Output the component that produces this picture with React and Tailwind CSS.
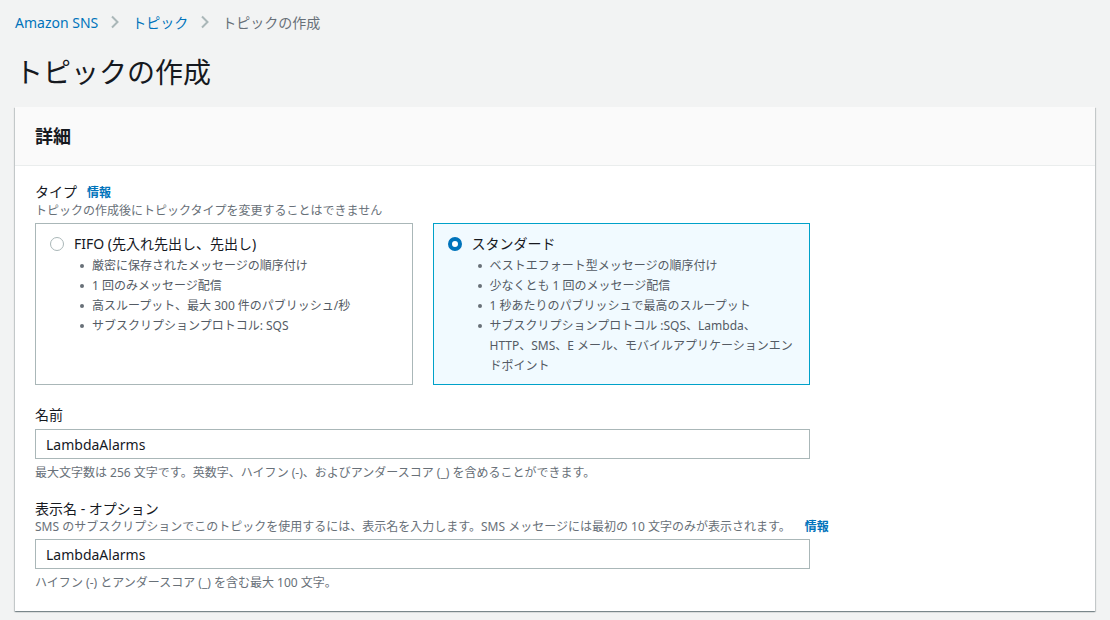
const font = { fontFamily: '"Noto Sans", "Noto Sans CJK JP", sans-serif' }

const Chevron = () => (
  <svg width="10" height="14" viewBox="0 0 10 14" className="mx-[12px]" aria-hidden>
    <path d="M2 1.5 L7.5 7 L2 12.5" fill="none" stroke="#aab7b8" strokeWidth="2" />
  </svg>
)

const RadioCard = ({ selected, title, items }) => (
  <div
    className={`h-[162px] flex-1 border px-[14px] pt-[10px] ${
      selected ? 'border-[#00a1c9] bg-[#f1faff]' : 'border-[#aab7b8] bg-white'
    }`}
  >
    <div className="flex items-center gap-[10px]">
      {selected ? (
        <span className="h-[14px] w-[14px] rounded-full border-[4px] border-[#0073bb] bg-white" />
      ) : (
        <span className="h-[14px] w-[14px] rounded-full border border-[#aab7b8] bg-white" />
      )}
      <span className="text-[14px] leading-[20px] text-[#16191f]">{title}</span>
    </div>
    <ul className="mt-[2px] pl-[30px]">
      {items.map((t) => (
        <li key={t} className="flex text-[12px] leading-[20px] text-[#545b64]">
          <span className="mr-[8px] mt-[8px] h-[4px] w-[4px] shrink-0 rounded-full bg-[#687078]" />
          <span>{t}</span>
        </li>
      ))}
    </ul>
  </div>
)

const Field = ({ label, desc, info, value, hint }) => (
  <div>
    <div className="text-[14px] leading-[20px] text-[#16191f]">{label}</div>
    {desc ? (
      <div className="whitespace-nowrap text-[12px] leading-[16px] text-[#687078]">
        {desc}
        {info ? <span className="ml-[14px] font-bold text-[#0073bb]">情報</span> : null}
      </div>
    ) : null}
    <div className="mt-[4px] flex h-[30px] items-center border border-[#aab7b8] bg-white px-[10px] text-[14px] text-[#16191f]">
      {value}
    </div>
    <div className="mt-[6px] text-[12px] leading-[16px] text-[#687078]">{hint}</div>
  </div>
)

export default function App() {
  return (
    <div className="min-h-[620px] bg-[#f2f3f3] px-[15px] pt-[12px]" style={font}>
      <nav className="flex h-[20px] items-center text-[14px]">
        <span className="text-[#0073bb]">Amazon SNS</span>
        <Chevron />
        <span className="text-[#0073bb]">トピック</span>
        <Chevron />
        <span className="text-[#687078]">トピックの作成</span>
      </nav>
      <h1 className="mt-[20px] text-[28px] leading-[40px] text-[#16191f]">トピックの作成</h1>
      <section className="mt-[15px] bg-white shadow-[0_1px_1px_0_rgba(0,28,36,0.3),1px_1px_1px_0_rgba(0,28,36,0.15),-1px_1px_1px_0_rgba(0,28,36,0.15)]">
        <div className="flex h-[59px] items-center border-b border-[#eaeded] bg-[#fafafa] px-[20px]">
          <h2 className="text-[18px] font-bold text-[#16191f]">詳細</h2>
        </div>
        <div className="w-[815px] px-[20px] pt-[16px] pb-[20px]">
          <div className="flex items-baseline gap-[10px] text-[14px] leading-[20px] text-[#16191f]">
            タイプ <span className="text-[12px] font-bold text-[#0073bb]">情報</span>
          </div>
          <div className="text-[12px] leading-[16px] text-[#687078]">
            トピックの作成後にトピックタイプを変更することはできません
          </div>
          <div className="mt-[4px] flex gap-[20px]">
            <RadioCard
              title="FIFO (先入れ先出し、先出し)"
              items={[
                '厳密に保存されたメッセージの順序付け',
                '1 回のみメッセージ配信',
                '高スループット、最大 300 件のパブリッシュ/秒',
                'サブスクリプションプロトコル: SQS',
              ]}
            />
            <RadioCard
              selected
              title="スタンダード"
              items={[
                'ベストエフォート型メッセージの順序付け',
                '少なくとも 1 回のメッセージ配信',
                '1 秒あたりのパブリッシュで最高のスループット',
                'サブスクリプションプロトコル :SQS、Lambda、HTTP、SMS、E メール、モバイルアプリケーションエンドポイント',
              ]}
            />
          </div>
          <div className="mt-[20px]">
            <Field
              label="名前"
              value="LambdaAlarms"
              hint="最大文字数は 256 文字です。英数字、ハイフン (-)、およびアンダースコア (_) を含めることができます。"
            />
          </div>
          <div className="mt-[18px]">
            <Field
              label="表示名 - オプション"
              desc="SMS のサブスクリプションでこのトピックを使用するには、表示名を入力します。SMS メッセージには最初の 10 文字のみが表示されます。"
              info
              value="LambdaAlarms"
              hint="ハイフン (-) とアンダースコア (_) を含む最大 100 文字。"
            />
          </div>
        </div>
      </section>
    </div>
  )
}
